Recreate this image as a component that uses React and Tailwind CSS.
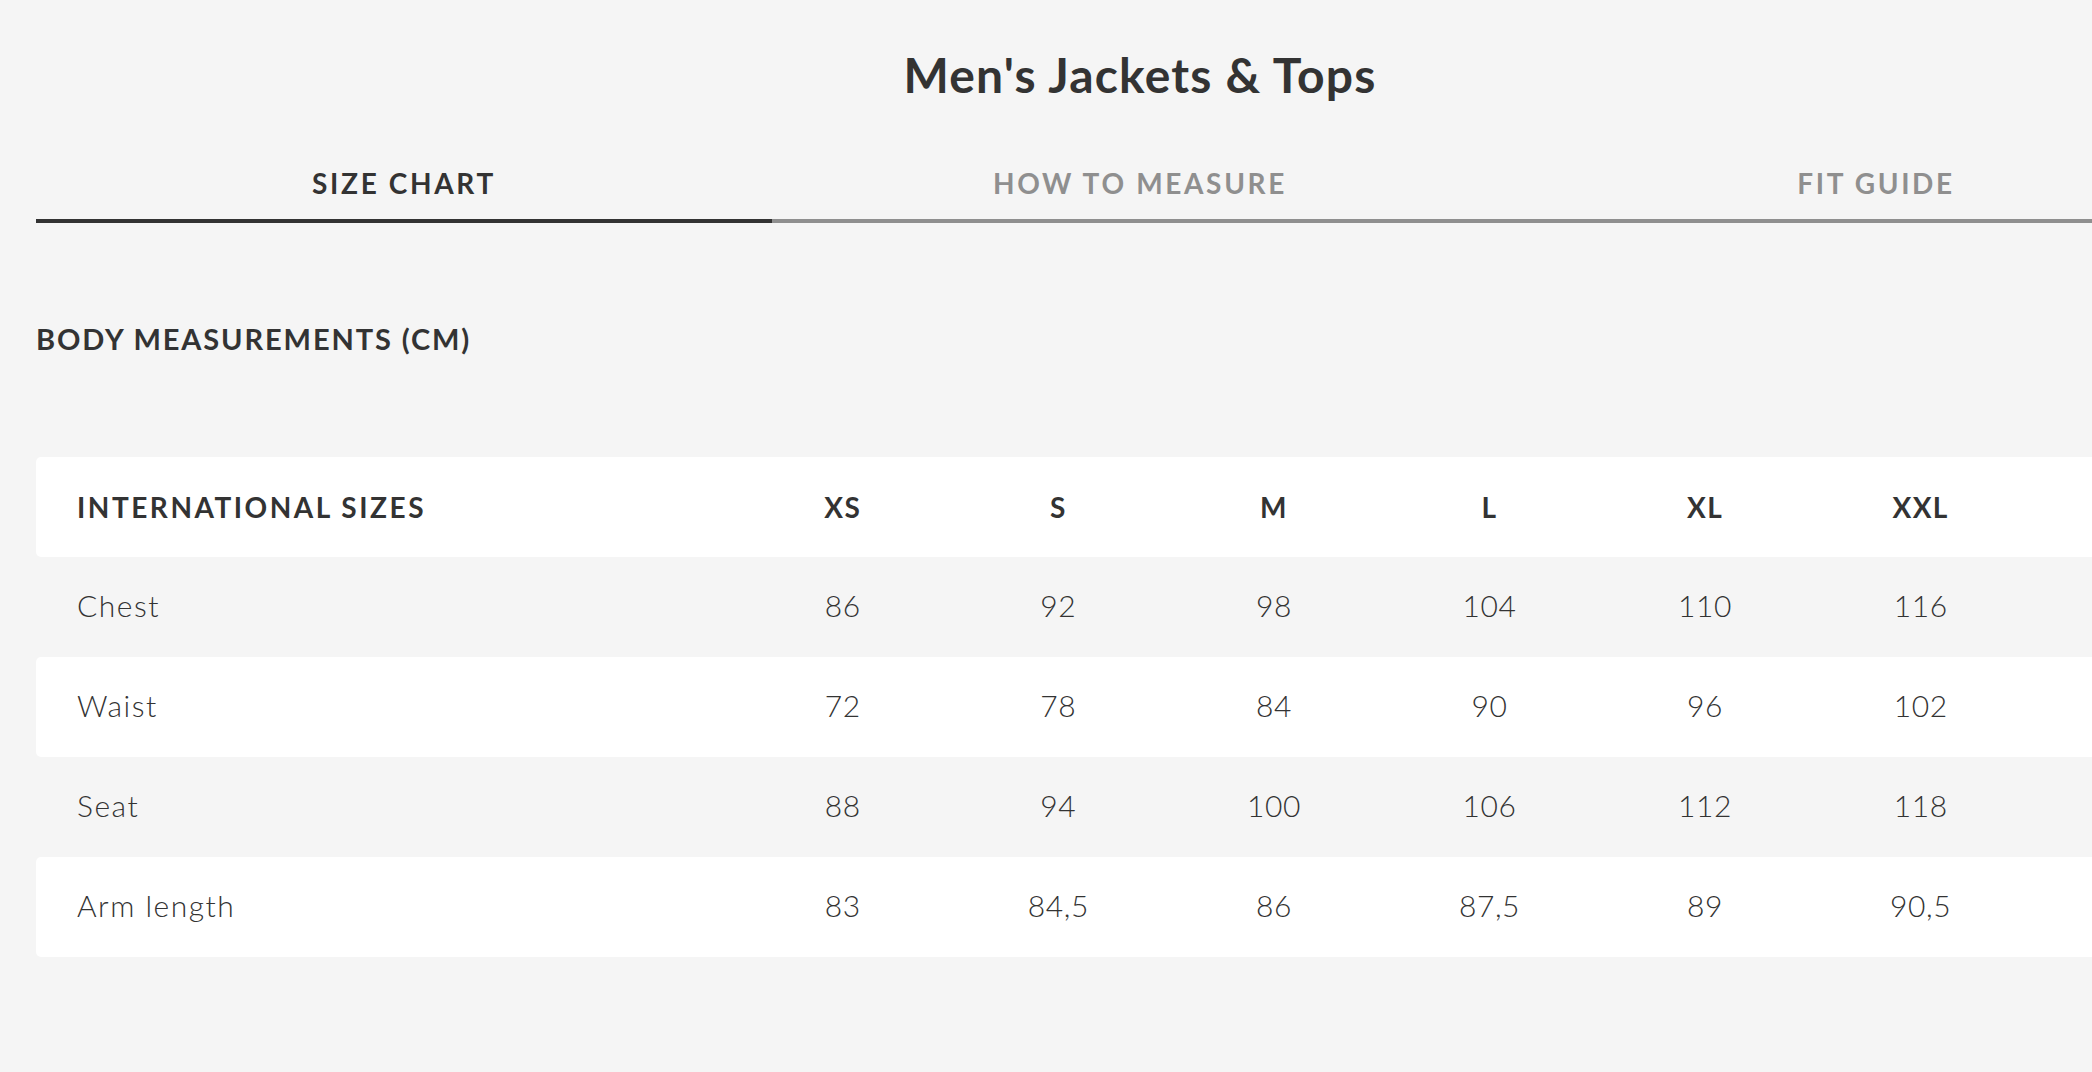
export default function App() {
  const sizes = ["XS", "S", "M", "L", "XL", "XXL", ""];
  const rows = [
    { label: "Chest", values: ["86", "92", "98", "104", "110", "116", ""], white: false },
    { label: "Waist", values: ["72", "78", "84", "90", "96", "102", ""], white: true },
    { label: "Seat", values: ["88", "94", "100", "106", "112", "118", ""], white: false },
    { label: "Arm length", values: ["83", "84,5", "86", "87,5", "89", "90,5", ""], white: true },
  ];
  const tabs = [
    { label: "SIZE CHART", active: true },
    { label: "HOW TO MEASURE", active: false },
    { label: "FIT GUIDE", active: false },
  ];
  return (
    <div
      className="w-full h-[1072px] overflow-hidden bg-[#f5f5f5] text-[#333333]"
      style={{ fontFamily: "Lato, 'Open Sans', sans-serif" }}
    >
      <div className="ml-[36px] w-[2208px]">
        <h1 className="pt-[51px] text-center text-[48px] leading-[48px] font-bold tracking-[0.025em]">
          Men's Jackets &amp; Tops
        </h1>

        <div className="mt-[70px] grid grid-cols-3">
          {tabs.map((t) => (
            <div
              key={t.label}
              className={
                t.active
                  ? "flex justify-center pb-[22px] border-b-4 border-[#333333] text-[#333333]"
                  : "flex justify-center pb-[22px] border-b-4 border-[#8f8f8f] text-[#8f8f8f]"
              }
            >
              <span className="text-[28px] leading-[28px] font-bold tracking-[0.095em]">{t.label}</span>
            </div>
          ))}
        </div>

        <h2 className="mt-[101px] text-[29px] leading-[30px] font-bold tracking-[0.065em]">
          BODY MEASUREMENTS (CM)
        </h2>

        <div className="mt-[103px] flex flex-col">
          <div className="grid grid-cols-[699px_repeat(7,1fr)] h-[100px] items-center bg-white rounded-[5px]">
            <div className="pl-[41px] text-[28px] font-bold tracking-[0.09em]">INTERNATIONAL SIZES</div>
            {sizes.map((s, i) => (
              <div key={i} className="text-center text-[28px] font-bold tracking-[0.05em]">
                {s}
              </div>
            ))}
          </div>
          {rows.map((r) => (
            <div
              key={r.label}
              className={
                r.white
                  ? "grid grid-cols-[699px_repeat(7,1fr)] h-[100px] items-center pb-[3px] bg-white rounded-[5px]"
                  : "grid grid-cols-[699px_repeat(7,1fr)] h-[100px] items-center pb-[3px]"
              }
            >
              <div className="pl-[41px] text-[30px] font-light tracking-[0.05em]">{r.label}</div>
              {r.values.map((v, i) => (
                <div key={i} className="text-center text-[30px] font-light tracking-[0.02em]">
                  {v}
                </div>
              ))}
            </div>
          ))}
        </div>
      </div>
    </div>
  );
}
